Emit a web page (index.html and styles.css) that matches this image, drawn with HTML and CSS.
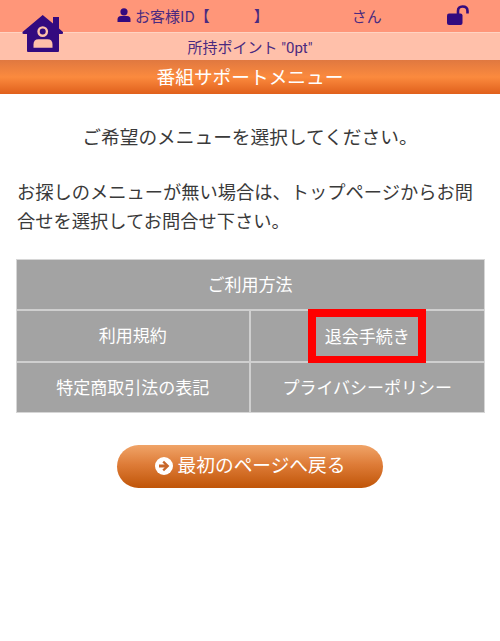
FILE: index.html
```html
<!DOCTYPE html>
<html lang="ja">
<head>
<meta charset="utf-8">
<title>番組サポートメニュー</title>
<link rel="stylesheet" href="styles.css">
</head>
<body>
<header class="site-header">
  <a class="home" href="#">
    <svg viewBox="0 0 42 38" width="42" height="38">
      <path fill="#330a7f" d="M20.7 1 L31 9.5 V3 H37 V14.5 L41 18 Q41.5 19.8 40 20 H37 V37 Q37 38 36 38 H6 Q5 38 5 37 V20 H1.5 Q0 19.8 .5 18 Z"/>
      <circle cx="20.7" cy="17.6" r="4.2" fill="none" stroke="#ffc0aa" stroke-width="2.4"/>
      <path fill="#ffc0aa" d="M11.5 33.8 V30.5 Q11.5 25.3 16.5 25.3 H25.5 Q30.5 25.3 30.5 30.5 V33.8 Z"/>
    </svg>
  </a>
  <div class="user-row">
    <span class="user-id">
      <svg class="user-icon" viewBox="0 0 14 14" width="14" height="14">
        <circle cx="7" cy="3.8" r="3.6" fill="#330a7f"/>
        <path fill="#330a7f" d="M.5 14 V11.5 Q.5 8 4 8 H10 Q13.5 8 13.5 11.5 V14 Z"/>
      </svg>
      お客様ID【<span class="id-gap"></span>】
    </span>
    <span class="san">さん</span>
    <svg class="lock" viewBox="0 0 22 20" width="22" height="20">
      <path fill="none" stroke="#330a7f" stroke-width="2.6" d="M11 10 V6 Q11 1.5 15.5 1.5 Q20.5 1.5 20.5 6 V8.5"/>
      <rect x="0" y="8.5" width="15.5" height="11.5" rx="2" fill="#330a7f"/>
    </svg>
  </div>
  <div class="points-row">所持ポイント "0pt"</div>
  <h1 class="page-title">番組サポートメニュー</h1>
</header>
<main class="content">
  <p class="lead">ご希望のメニューを選択してください。</p>
  <p class="note">お探しのメニューが無い場合は、トップページからお問合せを選択してお問合せ下さい。</p>
  <div class="menu">
    <a class="cell wide" href="#">ご利用方法</a>
    <a class="cell" href="#">利用規約</a>
    <a class="cell" href="#"><span class="mark">退会手続き</span></a>
    <a class="cell" href="#">特定商取引法の表記</a>
    <a class="cell" href="#">プライバシーポリシー</a>
  </div>
  <a class="back" href="#">
    <svg viewBox="0 0 18 18" width="18" height="18">
      <circle cx="9" cy="9" r="9" fill="#fff"/>
      <path fill="#c8672a" d="M9 3.8 L14.4 9 L9 14.2 L7.4 12.6 L9.7 10.4 H4 V7.6 H9.7 L7.4 5.4 Z"/>
    </svg>
    最初のページへ戻る
  </a>
</main>
</body>
</html>
```
FILE: styles.css
```css
* { box-sizing: border-box; }
html, body { margin: 0; padding: 0; }
body {
  width: 500px;
  height: 641px;
  overflow: hidden;
  background: #fff;
  color: #3a3a3a;
  font-family: "Noto Sans CJK JP", "Noto Sans", sans-serif;
}
a { text-decoration: none; color: inherit; }

.site-header { position: relative; }
.home { position: absolute; left: 22px; top: 14px; line-height: 0; z-index: 1; }
.user-row {
  height: 32px;
  background: #ff9679;
  color: #4a2a80;
  font-size: 15px;
  display: flex;
  align-items: center;
  padding-left: 117px;
  padding-bottom: 2px;
}
.user-id { display: flex; align-items: center; }
.user-icon { margin-right: 4px; }
.id-gap { width: 44px; }
.san { margin-left: 83px; }
.lock { margin-left: 65px; }
.points-row {
  height: 28px;
  background: #ffc0aa;
  border-top: 1px solid #ffd3c2;
  color: #4a2a80;
  font-size: 15px;
  display: flex;
  align-items: center;
  justify-content: center;
  font-family: "Roboto", "Noto Sans CJK JP", sans-serif;
}
.page-title {
  margin: 0;
  height: 34px;
  padding-bottom: 4px;
  background: linear-gradient(#e07840 0%, #fb8a3e 50%, #e0601c 100%);
  color: #fff;
  font-size: 18.7px;
  font-weight: 400;
  display: flex;
  align-items: center;
  justify-content: center;
}

.content { display: flex; flex-direction: column; align-items: center; padding: 0 16px; }
.lead { margin: 26px 0 0; font-size: 18.7px; line-height: 32px; text-align: center; }
.note { margin: 25px 0 0; align-self: stretch; padding: 0 1px; font-size: 18.25px; line-height: 29px; }

.menu {
  margin-top: 24px;
  width: 469px;
  height: 154px;
  display: grid;
  grid-template-columns: 1fr 1fr;
  grid-template-rows: repeat(3, minmax(0, 1fr));
  gap: 2px;
  background: #cfcfcf;
  border: 1px solid #d6d6d6;
}
.cell {
  background: #a3a3a3;
  color: #fff;
  font-size: 17px;
  display: flex;
  align-items: center;
  justify-content: center;
  padding-bottom: 2px;
  min-height: 0;
}
.wide { grid-column: 1 / 3; }
.mark {
  flex: none;
  width: 118px;
  height: 55px;
  margin-top: 3px;
  border: 8px solid #f00;
  display: flex;
  align-items: center;
  justify-content: center;
  padding-bottom: 3px;
  background: #a3a3a3;
}

.back {
  margin-top: 32px;
  width: 266px;
  height: 43px;
  padding-bottom: 6px;
  border-radius: 22px;
  background: linear-gradient(#f0a468 0%, #de7c38 45%, #c05508 100%);
  color: #fff;
  font-size: 18.7px;
  display: flex;
  align-items: center;
  justify-content: center;
  gap: 5px;
}
.back svg { margin-top: 4px; }
```
